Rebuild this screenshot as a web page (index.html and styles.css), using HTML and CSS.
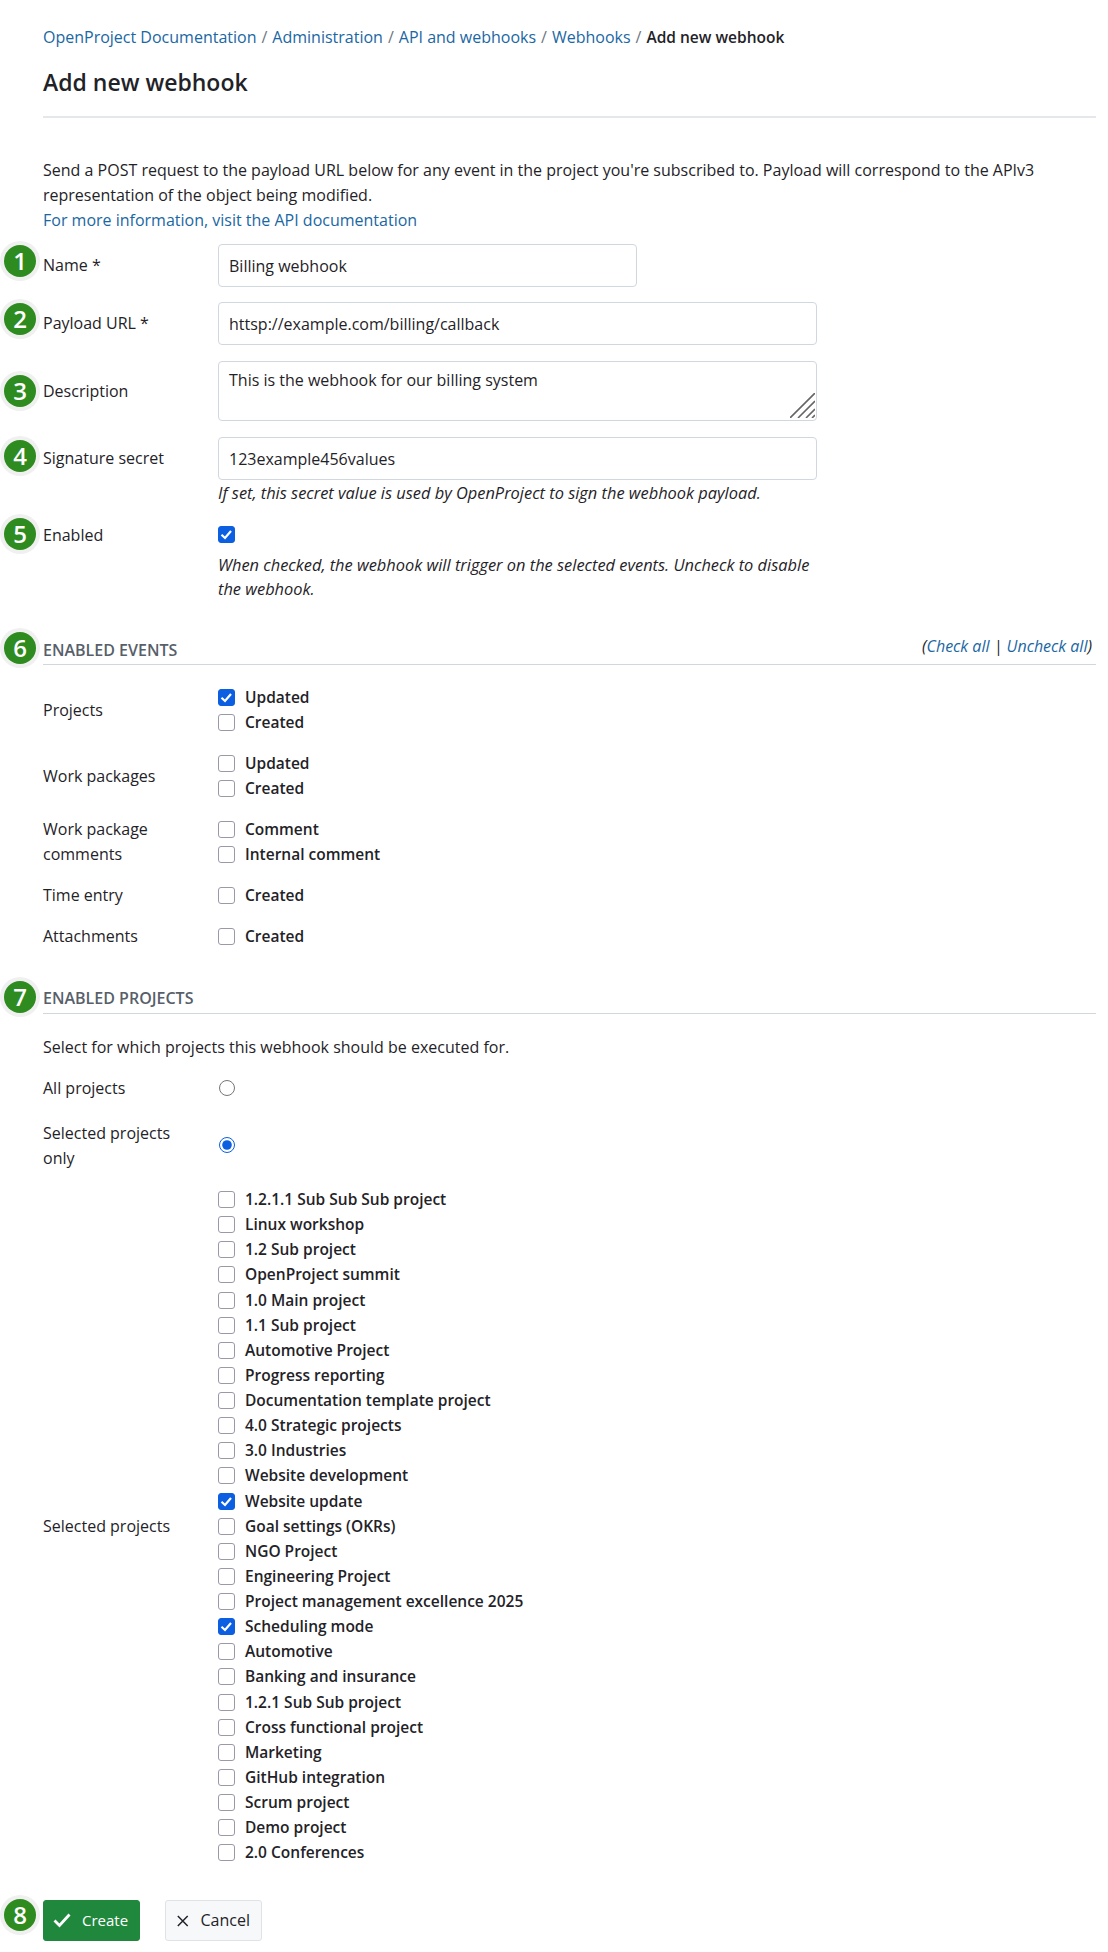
FILE: index.html
```html
<!DOCTYPE html>
<html lang="en">
<head>
    <meta charset="UTF-8">
    <title>Add new webhook</title>
    <link rel="stylesheet" href="styles.css">
</head>
<body>
    <div class="page">
        <div class="crumbs">
            <a href="#">OpenProject Documentation</a><span class="sep">/</span><a href="#">Administration</a><span class="sep">/</span><a href="#">API and webhooks</a><span class="sep">/</span><a href="#">Webhooks</a><span class="sep">/</span><b>Add new webhook</b>
        </div>
        <h1 class="title">Add new webhook</h1>

        <p class="intro">
            Send a POST request to the payload URL below for any event in the project you're subscribed to. Payload will correspond to the APIv3 representation of the object being modified.<br>
            <a href="#">For more information, visit the API documentation</a>
        </p>

        <div class="row rowName">
            <span class="badge">1</span>
            <label class="label">Name *</label>
            <input class="field fieldShort" type="text" value="Billing webhook">
        </div>
        <div class="row rowUrl">
            <span class="badge">2</span>
            <label class="label">Payload URL *</label>
            <input class="field" type="text" value="httsp://example.com/billing/callback">
        </div>
        <div class="row rowDesc">
            <span class="badge">3</span>
            <label class="label">Description</label>
            <div class="areaWrap">
                <textarea class="field area">This is the webhook for our billing system</textarea>
                <svg class="grip" width="25" height="25" viewBox="0 0 25 25"><path d="M0 25L25 0M8 25L25 8M16 25L25 16M22 25L25 22" stroke="#666" stroke-width="1.6" fill="none"/></svg>
            </div>
        </div>
        <div class="row rowSecret">
            <span class="badge">4</span>
            <label class="label">Signature secret</label>
            <div class="control">
                <input class="field" type="text" value="123example456values">
                <div class="hint">If set, this secret value is used by OpenProject to sign the webhook payload.</div>
            </div>
        </div>
        <div class="row rowEnabled">
            <span class="badge">5</span>
            <label class="label">Enabled</label>
            <div class="control">
                <input class="check" type="checkbox" checked>
                <div class="hint hintWrap">When checked, the webhook will trigger on the selected events. Uncheck to disable the webhook.</div>
            </div>
        </div>

        <div class="section sectionEvents">
            <span class="badge">6</span>
            <h2 class="sectionTitle">ENABLED EVENTS</h2>
            <span class="toggle">(<a href="#">Check all</a> | <a href="#">Uncheck all</a>)</span>
        </div>

        <div class="eventRow eventFirst">
            <div class="label">Projects</div>
            <div class="checks">
                <label class="opt"><input class="check" type="checkbox" checked>Updated</label>
                <label class="opt"><input class="check" type="checkbox">Created</label>
            </div>
        </div>
        <div class="eventRow">
            <div class="label">Work packages</div>
            <div class="checks">
                <label class="opt"><input class="check" type="checkbox">Updated</label>
                <label class="opt"><input class="check" type="checkbox">Created</label>
            </div>
        </div>
        <div class="eventRow">
            <div class="label">Work package comments</div>
            <div class="checks">
                <label class="opt"><input class="check" type="checkbox">Comment</label>
                <label class="opt"><input class="check" type="checkbox">Internal comment</label>
            </div>
        </div>
        <div class="eventRow">
            <div class="label">Time entry</div>
            <div class="checks">
                <label class="opt"><input class="check" type="checkbox">Created</label>
            </div>
        </div>
        <div class="eventRow">
            <div class="label">Attachments</div>
            <div class="checks">
                <label class="opt"><input class="check" type="checkbox">Created</label>
            </div>
        </div>

        <div class="section sectionProjects">
            <span class="badge">7</span>
            <h2 class="sectionTitle">ENABLED PROJECTS</h2>
        </div>
        <p class="select">Select for which projects this webhook should be executed for.</p>

        <div class="radioRow radioAll">
            <div class="label">All projects</div>
            <input class="radio" type="radio" name="scope">
        </div>
        <div class="radioRow radioSelected">
            <div class="label">Selected projects only</div>
            <input class="radio" type="radio" name="scope" checked>
        </div>

        <div class="projectRow">
            <div class="label">Selected projects</div>
            <div class="projects">
                <label class="opt"><input class="check" type="checkbox">1.2.1.1 Sub Sub Sub project</label>
                <label class="opt"><input class="check" type="checkbox">Linux workshop</label>
                <label class="opt"><input class="check" type="checkbox">1.2 Sub project</label>
                <label class="opt"><input class="check" type="checkbox">OpenProject summit</label>
                <label class="opt"><input class="check" type="checkbox">1.0 Main project</label>
                <label class="opt"><input class="check" type="checkbox">1.1 Sub project</label>
                <label class="opt"><input class="check" type="checkbox">Automotive Project</label>
                <label class="opt"><input class="check" type="checkbox">Progress reporting</label>
                <label class="opt"><input class="check" type="checkbox">Documentation template project</label>
                <label class="opt"><input class="check" type="checkbox">4.0 Strategic projects</label>
                <label class="opt"><input class="check" type="checkbox">3.0 Industries</label>
                <label class="opt"><input class="check" type="checkbox">Website development</label>
                <label class="opt"><input class="check" type="checkbox" checked>Website update</label>
                <label class="opt"><input class="check" type="checkbox">Goal settings (OKRs)</label>
                <label class="opt"><input class="check" type="checkbox">NGO Project</label>
                <label class="opt"><input class="check" type="checkbox">Engineering Project</label>
                <label class="opt"><input class="check" type="checkbox">Project management excellence 2025</label>
                <label class="opt"><input class="check" type="checkbox" checked>Scheduling mode</label>
                <label class="opt"><input class="check" type="checkbox">Automotive</label>
                <label class="opt"><input class="check" type="checkbox">Banking and insurance</label>
                <label class="opt"><input class="check" type="checkbox">1.2.1 Sub Sub project</label>
                <label class="opt"><input class="check" type="checkbox">Cross functional project</label>
                <label class="opt"><input class="check" type="checkbox">Marketing</label>
                <label class="opt"><input class="check" type="checkbox">GitHub integration</label>
                <label class="opt"><input class="check" type="checkbox">Scrum project</label>
                <label class="opt"><input class="check" type="checkbox">Demo project</label>
                <label class="opt"><input class="check" type="checkbox">2.0 Conferences</label>
            </div>
        </div>

        <div class="actions">
            <span class="badge">8</span>
            <button class="btn btnCreate" type="button">
                <svg width="18" height="15" viewBox="0 0 18 15"><path d="M1.5 7.5L6.5 12.5L16.5 1.5" stroke="#fff" stroke-width="2.8" fill="none"/></svg>
                Create
            </button>
            <button class="btn btnCancel" type="button">
                <svg width="14" height="14" viewBox="0 0 14 14"><path d="M1 1L13 13M13 1L1 13" stroke="#1f2328" stroke-width="1.8" fill="none"/></svg>
                Cancel
            </button>
        </div>
    </div>
</body>
</html>
```

FILE: styles.css
```css
* {
    box-sizing: border-box;
}
body {
    margin: 0;
    background: #fff;
    color: #1f2328;
    font-family: "Open Sans", "Noto Sans", sans-serif;
    font-size: 16px;
    line-height: 25px;
}
a {
    color: #1a67a3;
    text-decoration: none;
}
.page {
    position: relative;
    padding: 25px 12px 0 43px;
}
.crumbs {
    height: 25px;
}
.crumbs .sep {
    color: #6e7781;
    margin: 0 5px;
}
.crumbs b {
    font-size: 15.5px;
    font-weight: 600;
}
.title {
    margin: 17px 0 0;
    height: 51px;
    font-size: 23px;
    font-weight: 600;
    line-height: 30px;
    border-bottom: 2px solid #e4e8ec;
}
.intro {
    margin: 40px 0 0;
}
.row {
    position: relative;
    display: flex;
    align-items: center;
}
.label {
    width: 175px;
    flex: none;
    padding-right: 30px;
}
.field {
    display: block;
    width: 599px;
    height: 43px;
    padding: 0 10px;
    border: 1px solid #d0d7de;
    border-radius: 4px;
    background: #fff;
    color: #1f2328;
    font: inherit;
}
.fieldShort {
    width: 419px;
}
.rowName {
    margin-top: 11px;
}
.rowUrl {
    margin-top: 15px;
}
.rowDesc {
    margin-top: 16px;
}
.areaWrap {
    position: relative;
}
.area {
    height: 60px;
    padding-top: 6px;
    resize: none;
}
.grip {
    position: absolute;
    right: 2px;
    bottom: 3px;
}
.rowSecret {
    margin-top: 16px;
    align-items: flex-start;
}
.rowSecret .label {
    padding-top: 9px;
}
.control {
    width: 599px;
}
.hint {
    font-size: 16.4px;
    font-style: italic;
    line-height: 25px;
}
.hintWrap {
    margin-top: 10px;
    line-height: 24px;
}
.rowEnabled {
    margin-top: 21px;
    align-items: flex-start;
}
.rowEnabled .label {
    margin-top: -3px;
}
.check {
    display: block;
    flex: none;
    width: 17px;
    height: 17px;
    margin: 0;
    appearance: none;
    background: #fff;
    border: 1.5px solid #9b99a8;
    border-radius: 3px;
}
.check:checked {
    border-color: #0b5fe0;
    background: #0b5fe0 url("data:image/svg+xml,%3Csvg xmlns='http://www.w3.org/2000/svg' viewBox='0 0 17 17'%3E%3Cpath d='M3.5 8.8L7 12L13 5' stroke='%23fff' stroke-width='2.2' fill='none'/%3E%3C/svg%3E") center / 17px 17px no-repeat;
}
.section {
    position: relative;
    display: flex;
    align-items: flex-end;
    justify-content: space-between;
    height: 31px;
    border-bottom: 1px solid #d0d7de;
}
.sectionEvents {
    margin-top: 33px;
}
.sectionProjects {
    margin-top: 34px;
}
.sectionTitle {
    margin: 0;
    padding-bottom: 1px;
    font-size: 16px;
    font-weight: 600;
    color: #57606a;
}
.sectionProjects .sectionTitle {
    padding-bottom: 2px;
}
.toggle {
    font-style: italic;
    padding: 0 4px 5px 0;
}
.eventRow {
    display: flex;
    align-items: center;
    margin-top: 16px;
}
.eventFirst {
    margin-top: 20px;
}
.opt {
    display: flex;
    align-items: center;
    gap: 10px;
    font-size: 15.5px;
    font-weight: 600;
}
.select {
    margin: 21px 0 0;
}
.radioRow {
    display: flex;
    align-items: center;
}
.radioAll {
    margin-top: 16px;
}
.radioSelected {
    margin-top: 20px;
}
.radio {
    display: block;
    width: 16px;
    height: 16px;
    margin: -2px 0 0 1px;
    accent-color: #0b5fe0;
}
.projectRow {
    display: flex;
    align-items: center;
    margin-top: 16px;
}
.projects .opt {
    height: 25.14px;
}
.actions {
    position: relative;
    display: flex;
    gap: 25px;
    margin-top: 35px;
}
.btn {
    display: flex;
    align-items: center;
    height: 41px;
    border-radius: 3px;
    font: inherit;
}
.btnCreate {
    width: 97px;
    gap: 11px;
    padding: 0 9px;
    font-size: 15px;
    background: #1f883d;
    color: #fff;
    border: 1px solid #1f883d;
}
.btnCancel {
    width: 97px;
    gap: 12px;
    padding: 0 11px;
    background: #f6f8fa;
    color: #1f2328;
    border: 1.5px solid #dfe3e8;
}
.badge {
    position: absolute;
    left: -39px;
    width: 32px;
    height: 32px;
    border-radius: 50%;
    background: #2e8b1f;
    box-shadow: 0 0 0 4px #f0f0f0;
    color: #fff;
    font-size: 24px;
    font-weight: 600;
    line-height: 32px;
    text-align: center;
}
.rowName .badge, .rowUrl .badge {
    top: 1px;
}
.rowDesc .badge {
    top: 14px;
}
.rowSecret .badge {
    top: 3px;
}
.rowEnabled .badge {
    top: -8px;
}
.section .badge {
    top: -2px;
}
.actions .badge {
    top: -1px;
}
```
